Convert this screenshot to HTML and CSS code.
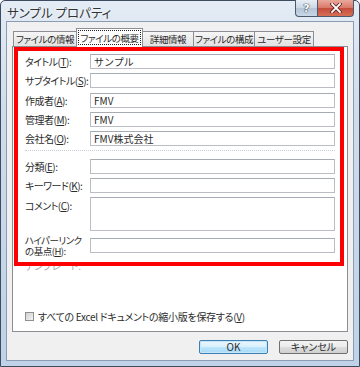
FILE: index.html
```html
<!DOCTYPE html>
<html lang="ja">
<head>
  <meta charset="UTF-8">
  <title>サンプル プロパティ</title>
  <link rel="stylesheet" href="styles.css">
</head>
<body>

  <div class="window">
    <div class="titlebar">
      <span class="title">サンプル プロパティ</span>
      <div class="caption-buttons">
        <span class="cbtn help">?</span>
        <span class="cbtn close">
          <svg width="12" height="10" viewBox="0 0 12 10">
            <path d="M2 1 L10 9 M10 1 L2 9" stroke="#5a2020" stroke-width="3.4" stroke-linecap="square"/>
            <path d="M2 1 L10 9 M10 1 L2 9" stroke="#fff" stroke-width="1.8" stroke-linecap="square"/>
          </svg>
        </span>
      </div>
    </div>

    <div class="client">
      <div class="tabs">
        <span class="tab t1">ファイルの情報</span>
        <span class="tab t2 active"><span class="focus">ファイルの概要</span></span>
        <span class="tab t3">詳細情報</span>
        <span class="tab t4">ファイルの構成</span>
        <span class="tab t5">ユーザー設定</span>
      </div>

      <div class="panel">
        <div class="highlight">
          <div class="fields">
            <label>タイトル(<u>T</u>):</label>
            <input type="text" value="サンプル">
            <label>サブタイトル(<u>S</u>):</label>
            <input type="text" value="">
            <label>作成者(<u>A</u>):</label>
            <input type="text" value="FMV">
            <label>管理者(<u>M</u>):</label>
            <input type="text" value="FMV">
            <label>会社名(<u>O</u>):</label>
            <input type="text" value="FMV株式会社">

            <div class="sep"></div>

            <label>分類(<u>E</u>):</label>
            <input type="text" value="">
            <label>キーワード(<u>K</u>):</label>
            <input type="text" value="">
            <label class="top">コメント(<u>C</u>):</label>
            <textarea></textarea>
            <label class="two-lines">ハイパーリンク<br>の基点(<u>H</u>):</label>
            <input type="text" value="">
          </div>
        </div>

        <div class="template"><span>テンプレート:</span></div>

        <label class="check">
          <span class="box"></span>
          <span class="check-text">すべての Excel ドキュメントの縮小版を保存する(<u>V</u>)</span>
        </label>
      </div>

      <div class="buttons">
        <button class="btn default">OK</button>
        <button class="btn">キャンセル</button>
      </div>
    </div>
  </div>

</body>
</html>
```

FILE: styles.css
```css
* {
  margin: 0;
  padding: 0;
  box-sizing: border-box;
}

body {
  font-family: "Noto Sans CJK JP", "Noto Sans", sans-serif;
  font-feature-settings: "palt";
  font-size: 10px;
  color: #2c2c2c;
  background: #fff;
}

.window {
  width: 360px;
  height: 367px;
  border: 1px solid #3d4c5e;
  border-radius: 5px 5px 0 0;
  background: linear-gradient(to bottom, #e4ecf5 0%, #cfdceb 30%, #bfd2e7 100%);
  padding: 0 5px 5px 5px;
  display: flex;
  flex-direction: column;
}

/* title bar */

.titlebar {
  height: 20px;
  display: flex;
  align-items: center;
  padding-left: 1px;
}

.title {
  font-size: 12.5px;
  color: #333;
  text-shadow: 0 0 3px #fff;
  margin-top: 3px;
}

.caption-buttons {
  margin-left: auto;
  align-self: flex-start;
  margin-top: -1px;
  display: flex;
}

.cbtn {
  height: 17px;
  display: flex;
  align-items: center;
  justify-content: center;
  border: 1px solid #4b5a6c;
  border-top: none;
}

.help {
  width: 22px;
  border-radius: 0 0 0 4px;
  border-right: none;
  background: linear-gradient(to bottom, #e8eef5 0%, #cbd7e4 50%, #b3c4d6 51%, #c9d7e6 100%);
  color: #fff;
  font-family: "DejaVu Sans", sans-serif;
  font-size: 11px;
  font-weight: bold;
  text-shadow: 0 0 1px #3b4552, 0 0 1px #3b4552, 0 0 1px #3b4552;
}

.close {
  width: 37px;
  border-radius: 0 0 4px 0;
  background: linear-gradient(to bottom, #e9a99b 0%, #d9776a 50%, #c44c3b 51%, #d66f55 100%);
}

/* client area */

.client {
  flex: 1;
  background: #f0f0f0;
  border: 1px solid #8a9db3;
  padding: 6px 5px 6px 5px;
  display: flex;
  flex-direction: column;
}

.tabs {
  height: 18px;
  display: flex;
  align-items: flex-end;
  padding-left: 1px;
}

.tab {
  height: 15px;
  display: flex;
  align-items: center;
  justify-content: center;
  border: 1px solid #8c8e94;
  border-bottom: none;
  border-right: none;
  background: linear-gradient(to bottom, #f6f6f6, #e2e2e2);
  white-space: nowrap;
  font-size: 9.5px;
  letter-spacing: -0.4px;
}

.t1 { width: 63px; }
.t2 { width: 67px; }
.t3 { width: 50px; }
.t4 { width: 61px; }
.t5 { width: 60px; border-right: 1px solid #8c8e94; }

.tab.active {
  height: 19px;
  margin-bottom: -1px;
  background: #fff;
  border-right: 1px solid #8c8e94;
  position: relative;
  z-index: 1;
  padding: 2px 2px 3px;
}

.tab.active + .tab {
  border-left: none;
}

.focus {
  display: flex;
  align-items: center;
  justify-content: center;
  width: 100%;
  height: 100%;
  outline: 1px dotted #222;
}

.panel {
  flex: 1;
  background: #fff;
  border: 1px solid #8c8e94;
  display: flex;
  flex-direction: column;
}

/* red annotation box */

.highlight {
  margin: 0 3px 0 1px;
  border: 4px solid #ff0000;
}

.fields {
  display: grid;
  grid-template-columns: 65px 1fr;
  row-gap: 4.25px;
  align-items: center;
  padding: 3px 5px 6px 7px;
}

.fields label {
  white-space: nowrap;
  letter-spacing: -0.5px;
}

.fields label.top {
  align-self: start;
  margin-top: 1px;
}

.fields label.two-lines {
  font-size: 9.5px;
  line-height: 10.5px;
  height: 21px;
}

.fields input,
.fields textarea {
  height: 15px;
  width: 100%;
  border: 1px solid #babdc3;
  border-top-color: #a7abb2;
  background: #fff;
  font-family: inherit;
  font-size: 10px;
  padding: 0 3px;
  color: #2c2c2c;
  outline: none;
}

.fields textarea {
  height: 34px;
  resize: none;
}

.sep {
  grid-column: 1 / 3;
  height: 1px;
  border-top: 1px dotted #c9ced6;
  margin-bottom: 3px;
}

.template {
  height: 5px;
  overflow: hidden;
  padding-left: 12px;
  color: #a8a8a8;
}

.template span {
  display: block;
  line-height: 11px;
  margin-top: -6px;
}

.check {
  display: flex;
  align-items: center;
  gap: 4px;
  margin: 40px 0 0 12px;
  height: 10px;
}

.check-text {
  white-space: nowrap;
  letter-spacing: -0.3px;
}

.box {
  width: 9px;
  height: 9px;
  border: 1px solid #8e8f8f;
  background: linear-gradient(to bottom right, #d2d2d2, #f2f2f2);
}

/* dialog buttons */

.buttons {
  margin-top: 8px;
  display: flex;
  justify-content: flex-end;
  gap: 11px;
}

.btn {
  width: 69px;
  height: 14px;
  border: 1px solid #707070;
  border-radius: 2px;
  background: linear-gradient(to bottom, #f4f4f4 0%, #ebebeb 50%, #dddddd 51%, #d0d0d0 100%);
  font-family: inherit;
  font-feature-settings: "palt";
  font-size: 10px;
  line-height: 12px;
  color: #2c2c2c;
}

.btn.default {
  border-color: #3c7fb1;
  background: linear-gradient(to bottom, #eaf6fd 0%, #d9f0fc 50%, #bee6fd 51%, #a7d9f5 100%);
  box-shadow: inset 0 0 0 1px #c5e6f9;
}
```
